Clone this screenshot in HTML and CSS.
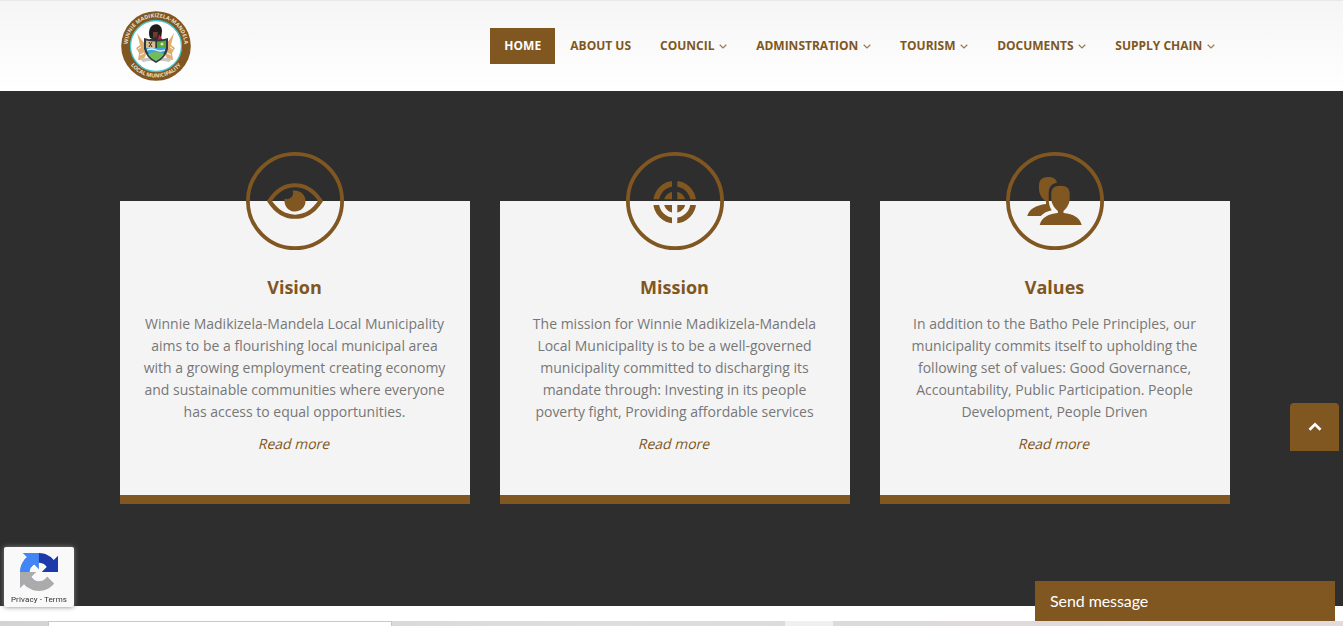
FILE: index.html
```html
<!DOCTYPE html>
<html lang="en">
<head>
<meta charset="utf-8">
<title>Winnie Madikizela-Mandela Local Municipality</title>
<link rel="stylesheet" href="styles.css">
</head>
<body>
<header class="header">
  <div class="container header-row">
    <a class="logo" href="#">
      <svg width="72" height="72" viewBox="0 0 72 72">
        <circle cx="36" cy="36" r="34.8" fill="#805621"/>
        <circle cx="36" cy="36" r="25.5" fill="#fff" stroke="#43c5cf" stroke-width="1.3"/>
        <path id="arc-top" d="M8.300 42A28.400 28.400 0 1 1 63.700 42" fill="none"/>
        <path id="arc-bottom" d="M7 49A32 32 0 0 0 65 49" fill="none"/>
        <text class="seal-text"><textPath href="#arc-top" startOffset="50%" textLength="86">WINNIE MADIKIZELA-MANDELA</textPath></text>
        <text class="seal-text"><textPath href="#arc-bottom" startOffset="50%" textLength="58">LOCAL MUNICIPALITY</textPath></text>
        <path d="M17 23l4 6 4 5-1 5 2 6-3 5h-5l1-7-3-5 4-3zM54 23l-4 6-4 5 1 5-2 6 3 5h5l-1-7 3-5-4-3z" fill="#dfad70"/>
        <path d="M18 39l3-2M20 45l4-2M53 39l-3-2M51 45l-4-2" stroke="#fff" stroke-width="1"/>
        <path d="M20 49c8-2 24-2 32 0l-3 3c-8-2-18-2-26 0z" fill="#c9c6c4"/>
        <path d="M30 28c-2-5-1-11 3-13 4-2 9 0 9 6l-1 8z" fill="#211b20"/>
        <path d="M33 22h5l-1 7h-4z" fill="#6b3d2a"/>
        <path d="M29 30c4-4 11-4 14 0z" fill="#333"/>
        <path d="M39 24l3 5-4 1z" fill="#c5283a"/>
        <path d="M24 28q12 4 24 0v11q-2 9-12 14-10-5-12-14z" fill="#303943"/>
        <path d="M26 30.500q5 1 9.300 1v6.500H26z" fill="#dcbb8b"/>
        <path d="M37 31.500q5 0 9-1V38h-9z" fill="#57a935"/>
        <path d="M26 38h20q-2 8-10 13-8-5-10-13z" fill="#41a4dd"/>
        <path d="M28 44q8-4 16 0-2 4-8 7-6-3-8-7z" fill="#72bd59"/>
        <path d="M27 40q5-2 9 0t9 0" stroke="#eefaff" stroke-width="1.300" fill="none"/>
        <path d="M29 32l3 5M32 32l-3 5" stroke="#3c291c"/>
        <circle cx="42" cy="34" r="1.500" fill="#d8e7b0"/>
      </svg>
    </a>
    <nav class="nav">
      <a class="nav-link active" href="#">HOME</a>
      <a class="nav-link" href="#">ABOUT US</a>
      <a class="nav-link" href="#">COUNCIL<svg class="caret" viewBox="0 0 8 5"><path d="M.7.8L4 4 7.300.8"/></svg></a>
      <a class="nav-link" href="#">ADMINSTRATION<svg class="caret" viewBox="0 0 8 5"><path d="M.7.8L4 4 7.300.8"/></svg></a>
      <a class="nav-link" href="#">TOURISM<svg class="caret" viewBox="0 0 8 5"><path d="M.7.8L4 4 7.300.8"/></svg></a>
      <a class="nav-link" href="#">DOCUMENTS<svg class="caret" viewBox="0 0 8 5"><path d="M.7.8L4 4 7.300.8"/></svg></a>
      <a class="nav-link" href="#">SUPPLY CHAIN<svg class="caret" viewBox="0 0 8 5"><path d="M.7.8L4 4 7.300.8"/></svg></a>
    </nav>
  </div>
</header>

<main class="about">
  <div class="container cards">
    <article class="card">
      <svg class="card-icon" viewBox="0 0 98 98">
        <circle class="ring" cx="49" cy="49" r="47.100"/>
        <path d="M23.500 49C37 28 61 28 74.500 49 61 70 37 70 23.500 49z" fill="none" stroke="#805621" stroke-width="4.200"/>
        <path d="M46.500 38.800A10.500 10.500 0 1 1 38.800 46.500 5.800 5.800 0 0 0 46.500 38.800z" fill="#805621"/>
      </svg>
      <h2>Vision</h2>
      <p>Winnie Madikizela-Mandela Local Municipality<br>aims to be a flourishing local municipal area<br>with a growing employment creating economy<br>and sustainable communities where everyone<br>has access to equal opportunities.</p>
      <a class="more" href="#">Read more</a>
    </article>
    <article class="card">
      <svg class="card-icon" viewBox="0 0 98 98">
        <mask id="cross">
          <rect width="98" height="98" fill="#fff"/>
          <path d="M46 20h5.300v60H46zM20 47.300h58V53H20z" fill="#000"/>
        </mask>
        <circle class="ring" cx="49" cy="49" r="47.100"/>
        <g mask="url(#cross)">
          <circle cx="48.700" cy="50.200" r="18.600" fill="none" stroke="#805621" stroke-width="5.600"/>
          <circle cx="48.700" cy="50.200" r="10.800" fill="#805621"/>
        </g>
      </svg>
      <h2>Mission</h2>
      <p>The mission for Winnie Madikizela-Mandela<br>Local Municipality is to be a well-governed<br>municipality committed to discharging its<br>mandate through: Investing in its people<br>poverty fight, Providing affordable services</p>
      <a class="more" href="#">Read more</a>
    </article>
    <article class="card">
      <svg class="card-icon" viewBox="0 0 98 98">
        <circle class="ring" cx="49" cy="49" r="47.100"/>
        <g fill="#805621">
          <path d="M54.500 33.700C61 33.700 63.700 36.500 63.700 42v4.500c0 5-2.700 9.500-6.200 12.500v2c10 .8 16.500 5 18.200 12h-42c1.700-7 8.200-11.200 18.200-12v-2c-3.700-3-6.600-7.500-6.600-12.500V42c0-5.500 2.700-8.300 9.200-8.300z"/>
          <path d="M42 25c5 0 8 1.800 9 5.600-6 1.400-8.300 5-8.300 11.400v5c0 4.500 1 8.500 3 11.300-4.500 1-8 2.700-11 5.700H21.300c1.500-6.500 8.700-11 18.700-12v-2.500c-4-3-7-7-7-12.500v-4c0-5 3-8 9-8z"/>
        </g>
      </svg>
      <h2>Values</h2>
      <p>In addition to the Batho Pele Principles, our<br>municipality commits itself to upholding the<br>following set of values: Good Governance,<br>Accountability, Public Participation. People<br>Development, People Driven</p>
      <a class="more" href="#">Read more</a>
    </article>
  </div>
</main>

<section class="next">
  <div class="strip"><div class="strip-panel"></div><div class="strip-light"></div></div>
</section>

<div class="recaptcha">
  <svg width="38" height="38" viewBox="0 0 64 64">
    <path fill="#1c3aa9" d="M64 31.955l-.033-1.370V4.687l-7.160 7.160C50.948 4.674 42.033.093 32.050.093c-10.400 0-19.622 4.960-25.458 12.640l11.736 11.860a15.550 15.550 0 0 1 4.754-5.334c2.050-1.600 4.952-2.906 8.968-2.906.485 0 .860.057 1.135.163 4.976.393 9.288 3.140 11.828 7.124l-8.307 8.307L64 31.953"/>
    <path fill="#4285f4" d="M31.862.094l-1.370.033H4.594l7.160 7.160C4.580 13.147 0 22.060 0 32.046c0 10.400 4.960 19.622 12.640 25.458L24.500 45.768a15.550 15.550 0 0 1-5.334-4.754c-1.600-2.050-2.906-4.952-2.906-8.968 0-.485.057-.860.163-1.135.393-4.976 3.140-9.288 7.124-11.828l8.307 8.307L31.860.095"/>
    <path fill="#ababab" d="M.001 32.045l.033 1.370v25.898l7.160-7.160c5.860 7.173 14.774 11.754 24.760 11.754 10.400 0 19.622-4.960 25.458-12.640l-11.736-11.860a15.550 15.550 0 0 1-4.754 5.334c-2.050 1.600-4.952 2.906-8.968 2.906-.485 0-.860-.057-1.135-.163-4.976-.393-9.288-3.140-11.828-7.124l8.307-8.307c-10.522.040-22.400.066-27.295-.005"/>
  </svg>
  <span>Privacy - Terms</span>
</div>

<a class="to-top" href="#"><svg width="14" height="10" viewBox="0 0 14 10"><path d="M1.500 7.700L7 2.300l5.500 5.400" fill="none" stroke="#fff" stroke-width="2.700"/></svg></a>
<div class="chat">Send message</div>
</body>
</html>
```
FILE: styles.css
```css
* { box-sizing: border-box; }
body {
  margin: 0;
  height: 626px;
  overflow: hidden;
  background: #fff;
  font-family: "Open Sans", sans-serif;
}
a { text-decoration: none; color: #805621; }
.container { width: 1110px; margin-left: 120px; }

.header {
  height: 91px;
  border-top: 1px solid #e9e9e9;
  background: linear-gradient(#f5f5f5, #fff);
}
.header-row { display: flex; justify-content: space-between; height: 90px; }
.logo { padding-top: 9px; height: 81px; }
.logo svg { display: block; }
.seal-text {
  font: bold 5.4px "Open Sans", sans-serif;
  fill: #eee1cf;
  text-anchor: middle;
}
.nav { display: flex; gap: 1px; padding: 27px 1px 0 0; }
.nav-link {
  display: flex;
  align-items: center;
  height: 36px;
  padding: 0 14px 2px;
  font-size: 12px;
  font-weight: 700;
  white-space: nowrap;
}
.nav-link.active { background: #805621; color: #fff; width: 65px; }
.caret {
  width: 8px;
  height: 5px;
  margin: 2px 0 0 4.7px;
  fill: none;
  stroke: #9b794f;
  stroke-width: 1.2;
}

.about { height: 515px; padding-top: 110px; background: #2e2e2e; }
.cards { display: grid; grid-template-columns: repeat(3, 350px); gap: 30px; }
.card {
  display: flex;
  flex-direction: column;
  align-items: center;
  height: 303px;
  background: #f4f4f4;
  border-bottom: 9px solid #805621;
  text-align: center;
}
.card-icon { width: 98px; height: 98px; margin-top: -49px; flex: none; }
.ring { fill: none; stroke: #805621; stroke-width: 3.8; }
.card h2 {
  margin: 25px 1px 0 0;
  font-size: 18px;
  line-height: 24px;
  font-weight: 700;
  color: #805621;
}
.card p {
  margin: 14px 1px 0 0;
  font-size: 14px;
  line-height: 22px;
  color: #777;
  white-space: nowrap;
}
.more {
  margin-top: 10px;
  font-size: 14px;
  line-height: 22px;
  transform: skewX(-14deg);
}

.next { padding-top: 15px; background: #fff; }
.strip {
  display: flex;
  height: 5px;
  padding-left: 48px;
  background: linear-gradient(90deg, #d3d3d3, #dedede 45%, #ded9da 65%, #e4dadd);
}
.strip-panel { width: 344px; background: #fff; border: 1px solid #c8c8c8; border-bottom: 0; }
.strip-light { width: 48px; margin-left: 393px; background: #f1f0f0; }

.recaptcha {
  position: fixed;
  left: 4px;
  top: 547px;
  width: 70px;
  height: 60px;
  padding-top: 6px;
  display: flex;
  flex-direction: column;
  align-items: center;
  background: #f9f9f9;
  border-radius: 2px;
  box-shadow: 0 0 5px #808080;
}
.recaptcha span {
  margin-top: 3px;
  font: 8px/11px Roboto, sans-serif;
  letter-spacing: 0.12px;
  color: #333;
  white-space: nowrap;
}
.to-top {
  position: fixed;
  left: 1290px;
  top: 403px;
  width: 49px;
  height: 48px;
  display: flex;
  align-items: center;
  justify-content: center;
  background: #805621;
  border-radius: 4px 4px 0 0;
}
.chat {
  position: fixed;
  left: 1035px;
  top: 581px;
  width: 300px;
  height: 40px;
  padding-left: 15px;
  background: #805621;
  color: #fff;
  font: 16px/40px Lato, sans-serif;
  letter-spacing: -0.08px;
}
```
